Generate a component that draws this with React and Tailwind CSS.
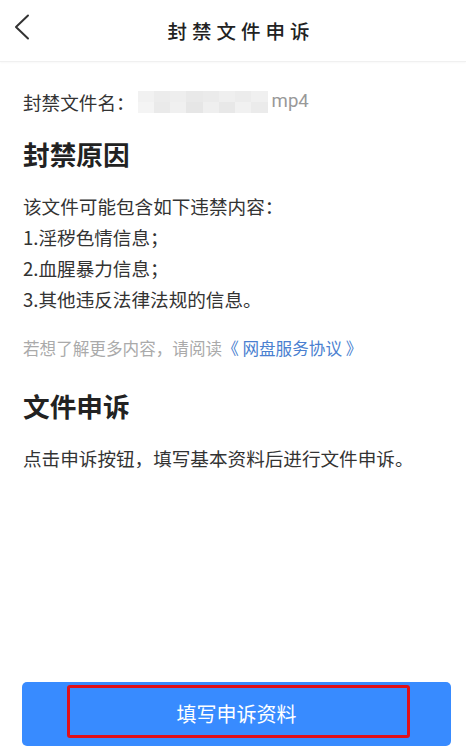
const font = { fontFamily: '"Noto Sans CJK SC", "Noto Sans", sans-serif' };

const blur = [
  ['#f1f1f1', '#ececec', '#eeeeee', '#e9e9e9', '#ebebeb', '#efefef', '#ececec', '#f0f0f0'],
  ['#f4f4f4', '#eaeaea', '#f0f0f0', '#e6e6e6', '#efefef', '#e8e8e8', '#f1f1f1', '#ebebeb'],
];

function BlurredName() {
  return (
    <div className="flex flex-col w-[130px] h-[22px] ml-[3px]">
      {blur.map((row, r) => (
        <div key={r} className="flex flex-1">
          {row.map((c, i) => (
            <div key={i} className="flex-1" style={{ backgroundColor: c }} />
          ))}
        </div>
      ))}
    </div>
  );
}

export default function App() {
  return (
    <div className="w-[466px] h-[756px] bg-white flex flex-col text-[#333]" style={font}>
      <header className="relative h-[62px] flex items-center justify-center border-b border-[#f0f0f0] shadow-[0_1px_2px_rgba(0,0,0,0.03)]">
        <svg className="absolute left-[12px] top-[13px] w-[20px] h-[28px]" viewBox="0 0 20 28" fill="none">
          <path d="M16 2.5 L4 14 L16 25.5" stroke="#333" strokeWidth="2" strokeLinecap="round" strokeLinejoin="round" />
        </svg>
        <h1 className="text-[19.5px] font-medium tracking-[5px] pl-[16px] text-[#222]">封禁文件申诉</h1>
      </header>

      <main className="flex-1 px-[23px]">
        <div className="mt-[24px] flex items-center text-[18.6px] leading-[31px]">
          <span>封禁文件名：</span>
          <BlurredName />
          <span className="ml-[4px] text-[#999]" style={{ fontFamily: 'Roboto, sans-serif' }}>mp4</span>
        </div>

        <h2 className="mt-[19px] text-[26.7px] leading-[36px] font-bold text-[#222]">封禁原因</h2>
        <div className="mt-[18px] text-[18.6px] leading-[31px]">
          <p>该文件可能包含如下违禁内容：</p>
          <p>1.淫秽色情信息；</p>
          <p>2.血腥暴力信息；</p>
          <p>3.其他违反法律法规的信息。</p>
        </div>

        <p className="mt-[22px] text-[16.6px] leading-[24px] text-[#aaa]">
          若想了解更多内容，请阅读<span className="text-[#4a7fd0]">《 网盘服务协议 》</span>
        </p>

        <h2 className="mt-[28px] text-[26.7px] leading-[36px] font-bold text-[#222]">文件申诉</h2>
        <p className="mt-[18px] text-[18.6px] leading-[31px]">点击申诉按钮，填写基本资料后进行文件申诉。</p>
      </main>

      <div className="ml-[22px] mr-[15px] mb-[10px]">
        <button className="relative w-full h-[64px] rounded-[5px] bg-[#388bff] text-white text-[20px] flex items-center justify-center">
          填写申诉资料
          <span className="absolute left-[45px] right-[41px] top-[3px] bottom-[8px] border-[3px] border-[#e0101a] rounded-[3px]" />
        </button>
      </div>
    </div>
  );
}
